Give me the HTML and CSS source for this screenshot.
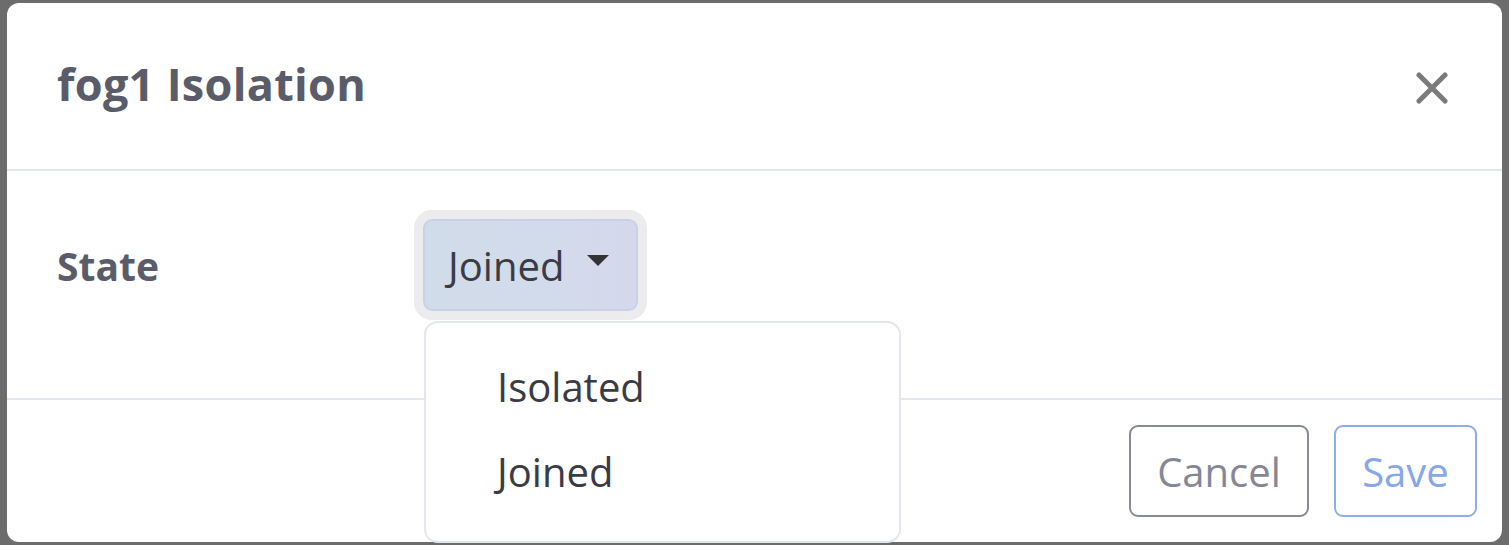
FILE: index.html
```html
<!DOCTYPE html>
<html>
<head>
<meta charset="utf-8">
<link rel="stylesheet" href="styles.css">
</head>
<body>
<div class="modal">
  <div class="modal-header">
    <h5 class="modal-title">fog1 Isolation</h5>
    <button class="close" aria-label="Close">
      <svg width="32" height="32" viewBox="0 0 32 32"><path d="M3 3 L29 29 M29 3 L3 29" stroke="#7b7b7b" stroke-width="5" stroke-linecap="round" fill="none"/></svg>
    </button>
  </div>
  <div class="modal-body">
    <label class="label">State</label>
    <div class="dropdown">
      <button class="toggle">Joined <span class="caret"></span></button>
    </div>
  </div>
  <div class="modal-footer">
    <button class="btn btn-cancel">Cancel</button>
    <button class="btn btn-save">Save</button>
  </div>
</div>
<div class="menu">
  <div class="item">Isolated</div>
  <div class="item">Joined</div>
</div>
</body>
</html>
```
FILE: styles.css
```css
html, body {
  margin: 0;
  padding: 0;
  background: #6c6c6c;
  width: 1509px;
  height: 545px;
  overflow: hidden;
  font-family: "Open Sans", "Noto Sans", sans-serif;
}
.modal {
  margin: 3px 0 0 7px;
  width: 1495px;
  height: 539px;
  background: #fff;
  border-radius: 12px;
  display: flex;
  flex-direction: column;
  box-sizing: border-box;
}
.modal-header {
  height: 168px;
  box-sizing: border-box;
  border-bottom: 2px solid #e3e6f0;
  display: flex;
  align-items: center;
  justify-content: space-between;
  padding: 0 54px 0 50px;
}
.modal-title {
  margin: 0;
  font-size: 45px;
  font-weight: 700;
  color: #5a5c69;
  letter-spacing: 0.3px;
  position: relative;
  top: -3px;
}
.close {
  border: 0;
  background: none;
  padding: 0;
  width: 32px;
  height: 32px;
  display: flex;
  position: relative;
  top: 2px;
}
.modal-body {
  height: 229px;
  box-sizing: border-box;
  border-bottom: 2px solid #e3e6f0;
  display: flex;
  align-items: flex-start;
  padding: 48px 0 0 50px;
}
.label {
  width: 366px;
  height: 92px;
  display: flex;
  align-items: center;
  font-size: 39px;
  font-weight: 700;
  color: #5a5c69;
}
.toggle {
  height: 92px;
  width: 215px;
  box-sizing: border-box;
  border: 2px solid #c9d1e8;
  border-radius: 9px;
  background: linear-gradient(90deg, #d1dcea 0%, #d2dbeb 60%, #d5d8ec 100%);
  box-shadow: 0 0 0 9px #ececef;
  font-family: "Open Sans", "Noto Sans", sans-serif;
  font-size: 40px;
  color: #3a3b45;
  display: flex;
  align-items: center;
  padding: 0 0 0 23px;
  gap: 23px;
}
.caret {
  width: 0;
  height: 0;
  border-left: 11px solid transparent;
  border-right: 11px solid transparent;
  border-top: 11px solid #333;
  position: relative;
  top: -5px;
}
.modal-footer {
  flex: 1;
  display: flex;
  align-items: center;
  justify-content: flex-end;
  gap: 25px;
  padding: 0 25px 0 0;
}
.btn {
  height: 92px;
  box-sizing: border-box;
  border-radius: 9px;
  background: #fff;
  font-family: "Open Sans", "Noto Sans", sans-serif;
  font-size: 40px;
  padding: 0;
}
.btn-cancel {
  width: 180px;
  border: 2px solid #878995;
  color: #858796;
}
.btn-save {
  width: 143px;
  border: 2px solid #8eaded;
  color: #88a6ea;
}
.menu {
  position: absolute;
  left: 424px;
  top: 321px;
  width: 477px;
  height: 222px;
  box-sizing: border-box;
  background: #fff;
  border: 2px solid #e3e6f0;
  border-radius: 14px;
  padding-top: 21px;
}
.item {
  height: 85px;
  display: flex;
  align-items: center;
  padding-left: 71px;
  font-size: 40px;
  color: #3a3b45;
}
```
